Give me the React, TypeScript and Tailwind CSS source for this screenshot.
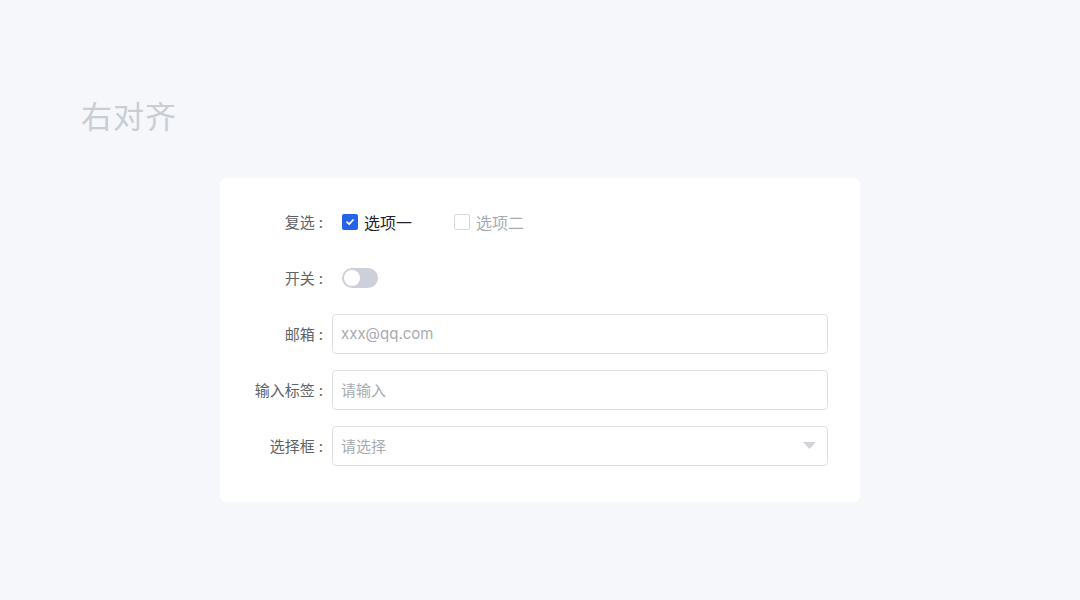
import React from "react";

function Label({ children }: { children: React.ReactNode }) {
  return (
    <div className="w-[80px] shrink-0 text-right pr-[9px] text-[#606266] whitespace-nowrap">
      {children}
      <span className="ml-[4px]">:</span>
    </div>
  );
}

export default function App() {
  const font = { fontFamily: '"Noto Sans CJK SC", "Noto Sans", sans-serif' };
  return (
    <div className="w-[1080px] h-[600px] bg-[#f5f7fb] overflow-hidden" style={font}>
      <div className="pl-[81px] pt-[93px]">
        <h1 className="text-[31px] leading-[44px] text-[#c9cdd4] font-normal tracking-[1px]">右对齐</h1>
      </div>
      <div className="ml-[220px] mt-[41px] w-[640px] bg-white rounded-[6px] pl-[32px] pr-[32px] pt-[24px] pb-[36px] flex flex-col gap-[16px] text-[15px]">
        <div className="flex items-center h-[40px]">
          <Label>复选</Label>
          <div className="flex items-center pl-[10px] text-[16px]">
            <span className="w-[16px] h-[16px] rounded-[2px] bg-[#2563eb] flex items-center justify-center">
              <svg width="10" height="10" viewBox="0 0 10 10"><path d="M2 5.2 L4.2 7.2 L8 3" stroke="white" strokeWidth="1.8" fill="none" strokeLinecap="round" strokeLinejoin="round" /></svg>
            </span>
            <span className="ml-[6px] text-[#1f2329]">选项一</span>
            <span className="ml-[42px] w-[16px] h-[16px] rounded-[2px] border border-[#d5d8de] bg-white" />
            <span className="ml-[6px] text-[#a8abb2]">选项二</span>
          </div>
        </div>
        <div className="flex items-center h-[40px]">
          <Label>开关</Label>
          <div className="pl-[10px]">
            <div className="w-[36px] h-[20px] rounded-full bg-[#cdd0db] flex items-center pl-[2px]">
              <div className="w-[16px] h-[16px] rounded-full bg-white" />
            </div>
          </div>
        </div>
        <div className="flex items-center h-[40px]">
          <Label>邮箱</Label>
          <div className="flex-1 h-[40px] border border-[#dcdfe6] rounded-[4px] flex items-center pl-[8px] text-[#a8abb2]" style={{ fontFamily: 'Inter, "Noto Sans", sans-serif' }}>xxx@qq.com</div>
        </div>
        <div className="flex items-center h-[40px]">
          <Label>输入标签</Label>
          <div className="flex-1 h-[40px] border border-[#dcdfe6] rounded-[4px] flex items-center pl-[8px] text-[#a8abb2]">请输入</div>
        </div>
        <div className="flex items-center h-[40px]">
          <Label>选择框</Label>
          <div className="flex-1 h-[40px] border border-[#dcdfe6] rounded-[4px] flex items-center justify-between pl-[8px] pr-[11px] text-[#a8abb2]">
            <span>请选择</span>
            <svg width="13" height="8" viewBox="0 0 13 8"><path d="M0 0 H13 L6.5 7 Z" fill="#d0d3d9" /></svg>
          </div>
        </div>
      </div>
    </div>
  );
}
